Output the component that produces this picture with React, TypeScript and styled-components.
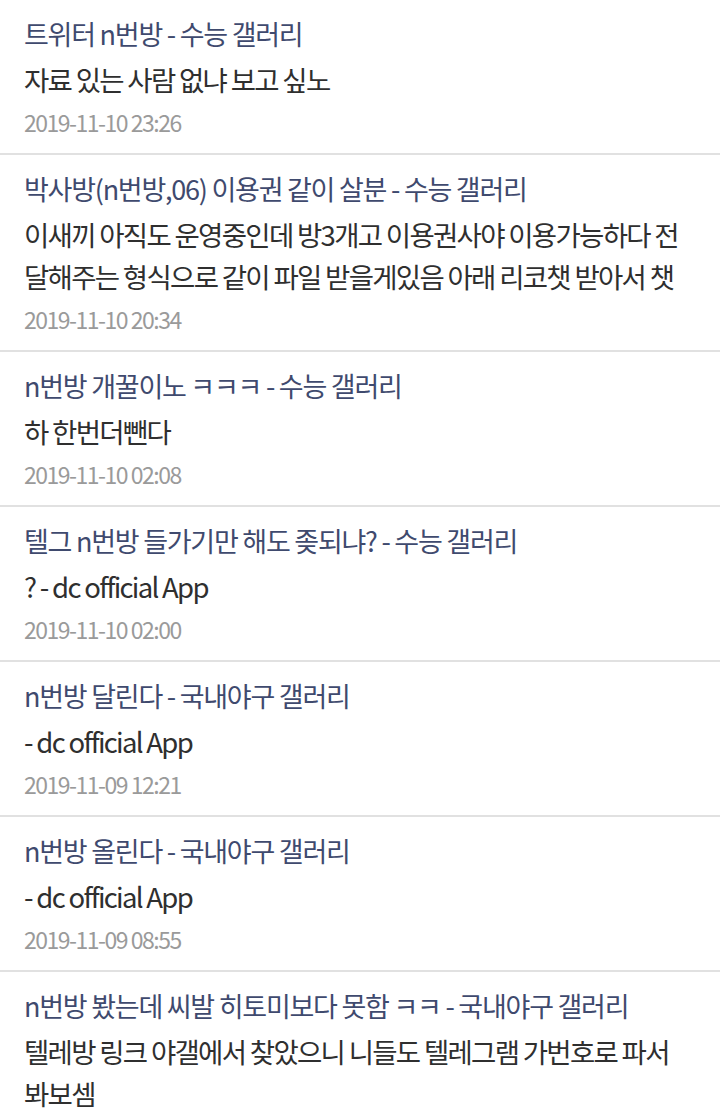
import styled, { createGlobalStyle } from 'styled-components';

interface Post {
  title: string;
  body: string;
  date: string;
}

const posts: Post[] = [
  {
    title: '트위터 n번방 - 수능 갤러리',
    body: '자료 있는 사람 없냐 보고 싶노',
    date: '2019-11-10 23:26',
  },
  {
    title: '박사방(n번방,06) 이용권 같이 살분 - 수능 갤러리',
    body: '이새끼 아직도 운영중인데 방3개고 이용권사야 이용가능하다 전달해주는 형식으로 같이 파일 받을게있음 아래 리코챗 받아서 챗',
    date: '2019-11-10 20:34',
  },
  {
    title: 'n번방 개꿀이노 ㅋㅋㅋ - 수능 갤러리',
    body: '하 한번더뺀다',
    date: '2019-11-10 02:08',
  },
  {
    title: '텔그 n번방 들가기만 해도 좆되냐? - 수능 갤러리',
    body: '? - dc official App',
    date: '2019-11-10 02:00',
  },
  {
    title: 'n번방 달린다 - 국내야구 갤러리',
    body: '- dc official App',
    date: '2019-11-09 12:21',
  },
  {
    title: 'n번방 올린다 - 국내야구 갤러리',
    body: '- dc official App',
    date: '2019-11-09 08:55',
  },
  {
    title: 'n번방 봤는데 씨발 히토미보다 못함 ㅋㅋ - 국내야구 갤러리',
    body: '텔레방 링크 야갤에서 찾았으니 니들도 텔레그램 가번호로 파서 봐보셈',
    date: '',
  },
];

const GlobalStyle = createGlobalStyle`
  html, body {
    margin: 0;
    padding: 0;
    background: #ffffff;
  }
  body {
    font-family: 'Noto Sans CJK KR', 'Noto Sans', sans-serif;
    -webkit-font-smoothing: antialiased;
  }
`;

const List = styled.ul`
  list-style: none;
  margin: 0;
  padding: 0;
  width: 720px;
  height: 1120px;
  overflow: hidden;
`;

const Item = styled.li`
  padding: 10px 24px 11px;
  border-bottom: 2px solid #e1e1e1;
`;

const Title = styled.div`
  font-size: 27px;
  line-height: 48px;
  color: #3f4a6e;
  letter-spacing: -1.25px;
  white-space: nowrap;
`;

const Body = styled.div`
  font-size: 27.5px;
  line-height: 42px;
  color: #2f2f2f;
  letter-spacing: -1.7px;
  word-break: normal;
  padding-right: 16px;
`;

const Date = styled.div`
  margin-top: 2px;
  font-size: 23px;
  line-height: 40px;
  color: #9a9a9a;
  letter-spacing: -1.5px;
`;

export default function App() {
  return (
    <>
      <GlobalStyle />
      <List>
        {posts.map((p, i) => (
          <Item key={i}>
            <Title>{p.title}</Title>
            <Body>{p.body}</Body>
            {p.date && <Date>{p.date}</Date>}
          </Item>
        ))}
      </List>
    </>
  );
}
